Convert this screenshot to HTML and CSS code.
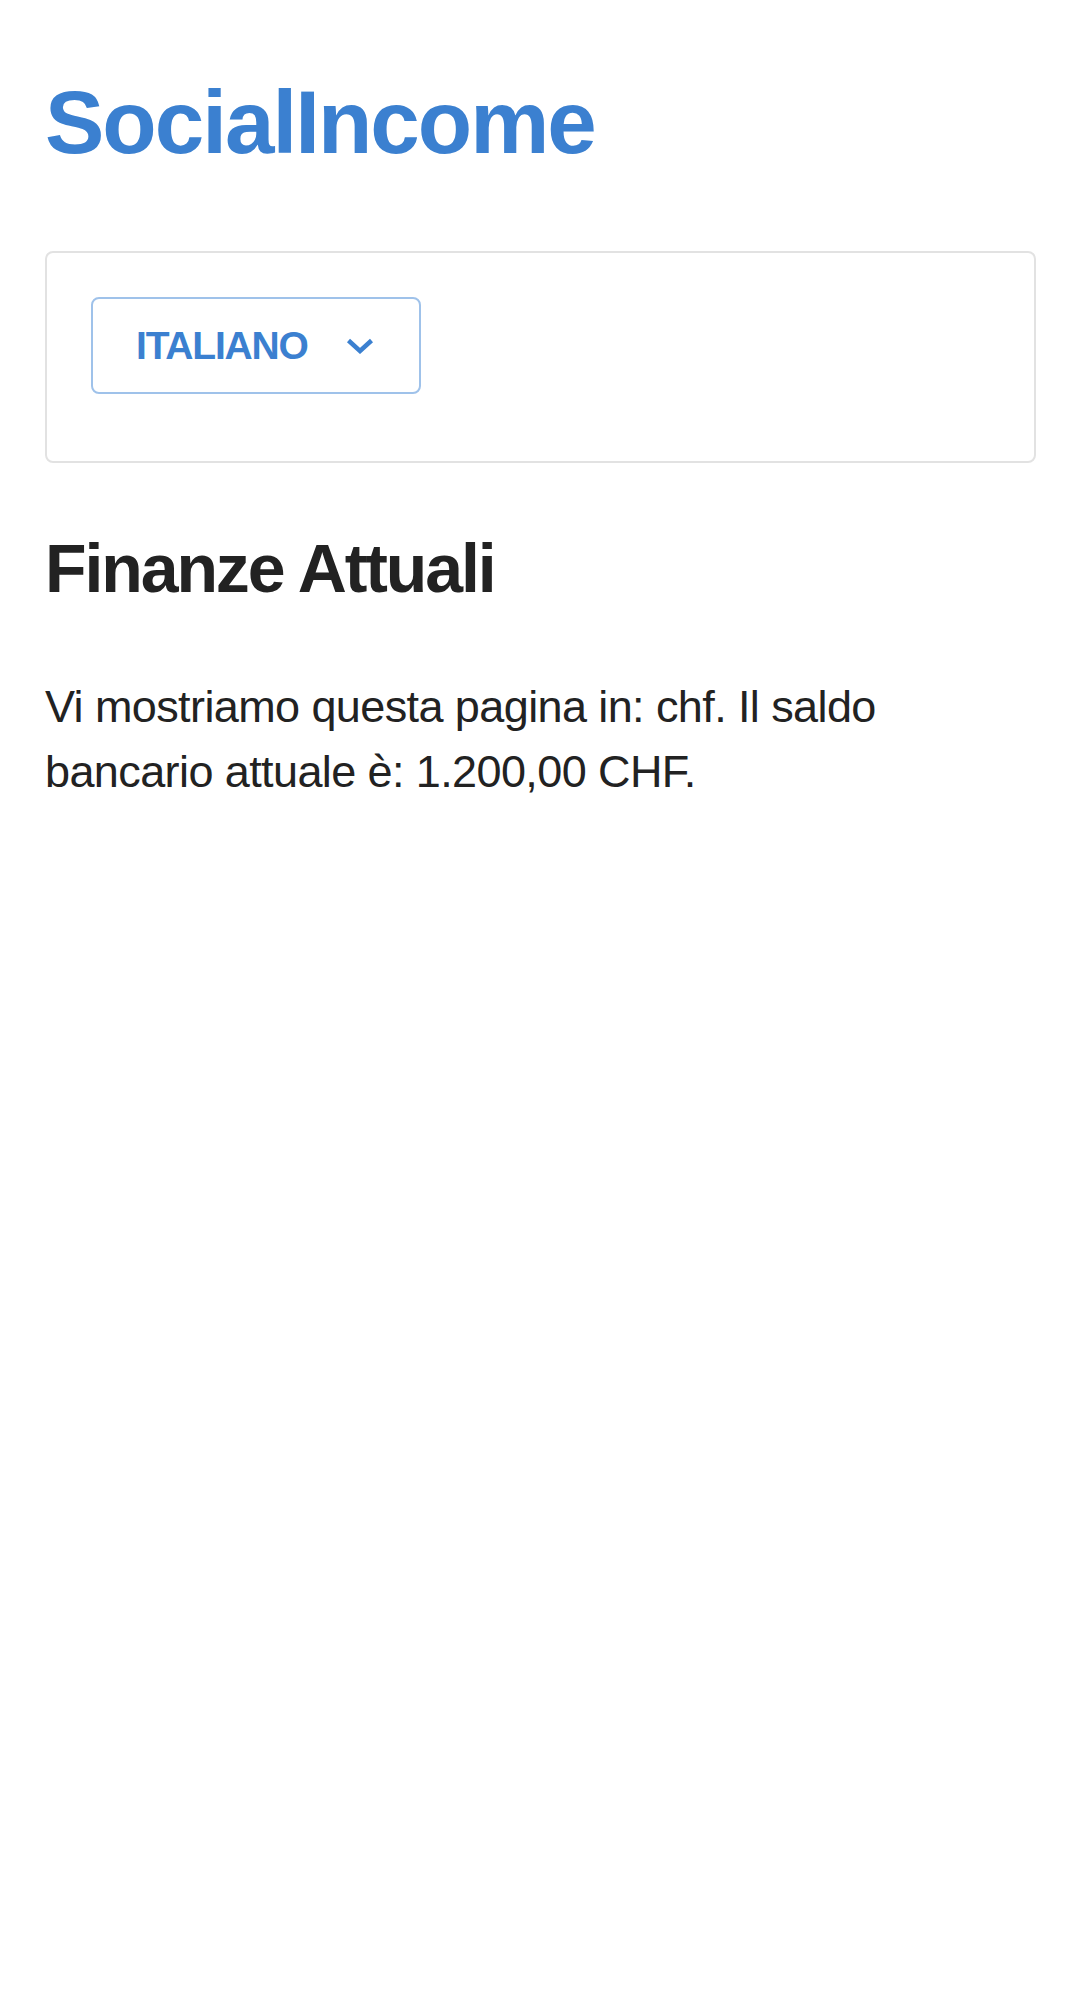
FILE: index.html
```html
<!DOCTYPE html>
<html lang="it">
<head>
<meta charset="utf-8">
<title>SocialIncome – Finanze Attuali</title>
<link rel="stylesheet" href="styles.css">
</head>
<body>
<div class="page">
  <header class="header">
    <h1 class="logo">SocialIncome</h1>
  </header>
  <section class="card">
    <button class="lang-select" type="button">
      <span class="lang-label">ITALIANO</span>
      <svg class="chevron" width="28" height="16" viewBox="0 0 28 16" aria-hidden="true">
        <polyline points="2.5,2.5 14,13 25.5,2.5" fill="none" stroke="currentColor" stroke-width="4.5"/>
      </svg>
    </button>
  </section>
  <main class="content">
    <h2 class="title">Finanze Attuali</h2>
    <p class="text">Vi mostriamo questa pagina in: chf. Il saldo bancario attuale è: 1.200,00 CHF.</p>
  </main>
</div>
</body>
</html>
```
FILE: styles.css
```css
html, body {
  margin: 0;
  padding: 0;
  background: #ffffff;
}

body {
  font-family: "Liberation Sans", Arial, sans-serif;
  color: #222222;
}

.page {
  padding: 0 45px;
}

.header {
  padding-top: 78px;
}

.logo {
  margin: 0;
  font-size: 89px;
  line-height: 89px;
  font-weight: 700;
  letter-spacing: -2px;
  color: #3b80d0;
}

.card {
  margin-top: 84px;
  border: 2px solid #e2e2e2;
  border-radius: 8px;
  padding: 44px 44px 67px 44px;
}

.lang-select {
  display: inline-flex;
  align-items: center;
  gap: 38px;
  box-sizing: border-box;
  height: 97px;
  padding: 0 45px 0 43px;
  background: #ffffff;
  border: 2px solid #9fc2ea;
  border-radius: 8px;
  color: #3b80d0;
  font-family: "Liberation Sans", Arial, sans-serif;
  cursor: pointer;
}

.lang-label {
  font-size: 39px;
  font-weight: 700;
  letter-spacing: -1.2px;
  line-height: 1;
}

.chevron {
  display: block;
  flex: none;
}

.content {
  margin-top: 64px;
}

.title {
  margin: 0;
  font-size: 68px;
  line-height: 82px;
  font-weight: 700;
  letter-spacing: -2.1px;
  color: #222222;
}

.text {
  margin: 65px 0 0 0;
  font-size: 45px;
  line-height: 65px;
  letter-spacing: -0.6px;
  color: #222222;
}
```
